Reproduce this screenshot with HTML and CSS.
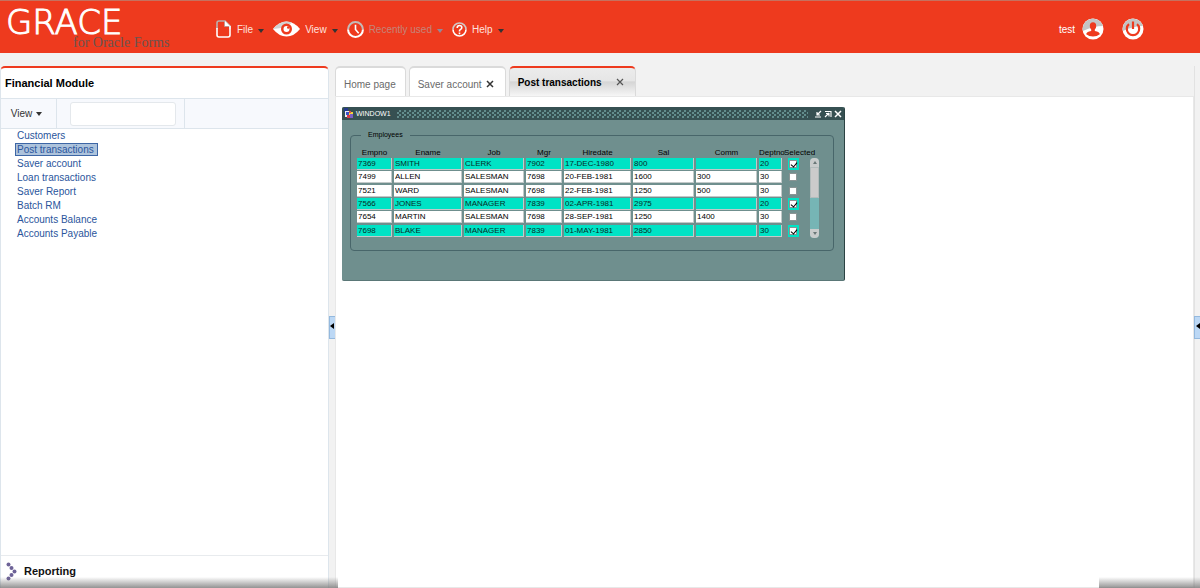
FILE: index.html
```
<!DOCTYPE html>
<html lang="en">
<head>
  <meta charset="UTF-8">
  <title>GRACE for Oracle Forms</title>
  <link rel="stylesheet" href="styles.css">
</head>
<body>
  <header class="topbar">
    <div class="logo">
      <span class="logo-name">GRACE</span>
      <span class="logo-sub">for Oracle Forms</span>
    </div>

    <nav class="menu">
      <button class="menu-item">
        <svg width="16" height="18" viewBox="0 0 16 18" fill="none" stroke-width="1.6">
          <path d="M1 9V3q0-2 2-2h6l5 5v3M9 1v5h5" stroke="#b9b0ae"/>
          <path d="M1 8v7q0 2 2 2h9q2 0 2-2V6" stroke="#fff"/>
          <path d="M9 1v5h5z" fill="#fff" stroke="none"/>
        </svg>
        File <span class="caret"></span>
      </button>
      <button class="menu-item">
        <svg width="27" height="16" viewBox="0 0 27 16">
          <path d="M0 8Q6 0.500 13.500 0.500T27 8Q21 15.500 13.500 15.500T0 8z" fill="#fff"/>
          <path d="M0 8Q6 0.500 13.500 0.500L19 1.500Q14 7 0 8z" fill="#d2d2d2"/>
          <circle cx="13.500" cy="8" r="5.500" fill="#ee3a1e"/>
          <circle cx="13.500" cy="8" r="3" fill="#fff"/>
          <circle cx="15.200" cy="6.500" r="1.200" fill="#ee3a1e"/>
        </svg>
        View <span class="caret"></span>
      </button>
      <button class="menu-item" disabled>
        <svg width="17" height="17" viewBox="0 0 16 16" fill="none" stroke-width="1.900">
          <path d="M1 8a7 7 0 0 1 14 0" stroke="#c3bab8"/>
          <path d="M15 8a7 7 0 0 1-14 0" stroke="#fff"/>
          <path d="M8 3.500V8l3 3.500" stroke="#fff" stroke-width="1.500"/>
        </svg>
        Recently used <span class="caret"></span>
      </button>
      <button class="menu-item">
        <svg width="15" height="15" viewBox="0 0 15 15" fill="none" stroke-width="1.600">
          <path d="M1 7.500a6.500 6.500 0 0 1 13 0" stroke="#d0c8c6"/>
          <path d="M14 7.500a6.500 6.500 0 0 1-13 0" stroke="#fff"/>
          <path d="M5.200 6q0-2.500 2.300-2.500t2.300 2q0 1.200-1.200 1.900T7.500 9v.5M7.500 10.600v1.600" stroke="#fff"/>
        </svg>
        Help <span class="caret"></span>
      </button>
    </nav>

    <div class="user">
      <span>test</span>
      <button class="round" aria-label="User profile">
        <svg width="22" height="22" viewBox="0 0 22 22">
          <circle cx="11" cy="11" r="10.500" fill="#fff"/>
          <path d="M.5 11a10.500 10.500 0 0 1 20.500-3Q12 8 .8 13z" fill="#c4c4c4"/>
          <path d="M11 4.300q3.200 0 3.200 3.600 0 2.300-1.400 3.600v1.400q5 .8 5 3.300-2.800 2.200-6.800 2.200t-6.800-2.200q0-2.500 5-3.300v-1.400q-1.400-1.300-1.400-3.600 0-3.600 3.200-3.600z" fill="#ee3a1e"/>
        </svg>
      </button>
      <button class="round" aria-label="Log out">
        <svg width="22" height="22" viewBox="0 0 22 22">
          <circle cx="11" cy="11" r="10.500" fill="#fff"/>
          <path d="M.5 11a10.500 10.500 0 0 1 20.500-3Q12 8 .8 13z" fill="#c4c4c4"/>
          <path d="M7 6.200a6.200 6.200 0 1 0 8 0M11 3.500v7.500" fill="none" stroke="#ee3a1e" stroke-width="2.200"/>
        </svg>
      </button>
    </div>
  </header>

  <div class="workspace">
    <aside class="sidebar">
      <h2 class="side-title">Financial Module</h2>
      <div class="toolbar">
        <button class="view-btn">View <span class="caret"></span></button>
        <div class="search"><input type="text" aria-label="Search modules"></div>
      </div>
      <ul class="links">
        <li><a href="#">Customers</a></li>
        <li><a href="#" class="selected">Post transactions</a></li>
        <li><a href="#">Saver account</a></li>
        <li><a href="#">Loan transactions</a></li>
        <li><a href="#">Saver Report</a></li>
        <li><a href="#">Batch RM</a></li>
        <li><a href="#">Accounts Balance</a></li>
        <li><a href="#">Accounts Payable</a></li>
      </ul>
      <button class="reporting">
        <svg width="11" height="19" viewBox="0 0 11 19" fill="#6d6297">
          <circle cx="2.500" cy="2.500" r="2"/>
          <circle cx="5.500" cy="6" r="2"/>
          <circle cx="8.500" cy="9.500" r="2"/>
          <circle cx="5.500" cy="13" r="2"/>
          <circle cx="2.500" cy="16.500" r="2"/>
        </svg>
        Reporting
      </button>
    </aside>

    <div class="splitter"><button class="handle" aria-label="Collapse left panel"></button></div>

    <main class="main">
      <div class="tabs">
        <button class="tab">Home page</button>
        <button class="tab closable">Saver account
          <svg width="8" height="8" viewBox="0 0 8 8" stroke="#333" stroke-width="1.500"><path d="M1 1l6 6M7 1l-6 6"/></svg>
        </button>
        <button class="tab closable active">Post transactions
          <svg width="8" height="8" viewBox="0 0 8 8" stroke="#555" stroke-width="1.200"><path d="M1 1l6 6M7 1l-6 6"/></svg>
        </button>
      </div>

      <div class="page">
        <section class="window">
          <div class="titlebar">
            <svg width="10" height="11" viewBox="0 0 10 11">
              <path d="M0 0h4v4H0z" fill="#253a8c"/>
              <path d="M1 3h6v6H1z" fill="#e8eef4"/>
              <path d="M2 4h3v3H2z" fill="#3a52c8"/>
              <path d="M5 4h4v4H5z" fill="#f2d43c"/>
              <path d="M3 7h3v3H3z" fill="#d93a4a"/>
              <path d="M6 6h3v4H6z" fill="#7a5fc0"/>
              <path d="M5 3h2v2H5z" fill="#e04a4a"/>
            </svg>
            <span>WINDOW1</span>
            <span class="grip"></span>
            <svg width="28" height="8" viewBox="0 0 28 8" fill="none" stroke="#fff">
              <path d="M1 7h6M7 1L3 5M3 2v3h3" stroke-width="1.200"/>
              <path d="M11 1.500h6V7M11 7l4-4M12 3.500h3v3" stroke-width="1.100"/>
              <path d="M21 1l6 6M27 1l-6 6" stroke-width="1.500"/>
            </svg>
          </div>

          <fieldset class="employees">
            <legend>Employees</legend>
            <div class="block">
              <table>
                <colgroup>
                  <col class="c-empno"><col class="c-ename"><col class="c-job"><col class="c-mgr">
                  <col class="c-hire"><col class="c-sal"><col class="c-comm"><col class="c-dept"><col class="c-sel">
                </colgroup>
                <thead>
                  <tr>
                    <th>Empno</th>
                    <th>Ename</th>
                    <th>Job</th>
                    <th>Mgr</th>
                    <th>Hiredate</th>
                    <th>Sal</th>
                    <th>Comm</th>
                    <th>Deptno</th>
                    <th>Selected</th>
                  </tr>
                </thead>
                <tbody id="rows"></tbody>
              </table>
              <div class="scroll">
                <span class="arrow up"></span>
                <span class="thumb"></span>
                <span class="arrow down"></span>
              </div>
            </div>
          </fieldset>
        </section>
      </div>
    </main>

    <div class="splitter right"><button class="handle" aria-label="Expand right panel"></button></div>
  </div>

  <div class="shade shade-left"></div>
  <div class="shade shade-right"></div>

  <script>
    const columns = ['Empno', 'Ename', 'Job', 'Mgr', 'Hiredate', 'Sal', 'Comm', 'Deptno'];
    const employees = [
      ['7369', 'SMITH', 'CLERK', '7902', '17-DEC-1980', '800', '', '20', true],
      ['7499', 'ALLEN', 'SALESMAN', '7698', '20-FEB-1981', '1600', '300', '30', false],
      ['7521', 'WARD', 'SALESMAN', '7698', '22-FEB-1981', '1250', '500', '30', false],
      ['7566', 'JONES', 'MANAGER', '7839', '02-APR-1981', '2975', '', '20', true],
      ['7654', 'MARTIN', 'SALESMAN', '7698', '28-SEP-1981', '1250', '1400', '30', false],
      ['7698', 'BLAKE', 'MANAGER', '7839', '01-MAY-1981', '2850', '', '30', true]
    ];

    document.getElementById('rows').innerHTML = employees.map(emp => {
      const checked = emp[8];
      const cells = columns.map((name, i) =>
        `<td><input type="text" aria-label="${name}" value="${emp[i]}"></td>`).join('');
      return `<tr class="${checked ? 'picked' : ''}">${cells}
        <td class="sel"><label><input type="checkbox" aria-label="Selected" ${checked ? 'checked' : ''}></label></td></tr>`;
    }).join('');
  </script>
</body>
</html>
```
FILE: styles.css
```
* { box-sizing: border-box; }
body {
  margin: 0;
  height: 100vh;
  display: flex;
  flex-direction: column;
  overflow: hidden;
  background: #f2f2f2;
  font-family: "Liberation Sans", Arial, sans-serif;
  font-size: 10px;
}
button { font: inherit; border: 0; padding: 0; background: none; color: inherit; }
svg { flex: none; display: block; }

.caret {
  border: 3px solid transparent;
  border-top: 4px solid #333;
  border-bottom: 0;
}

/* top bar */
.topbar {
  display: flex;
  align-items: center;
  height: 53px;
  padding: 4px 56px 0 6px;
  background: #ee3a1e;
  border-top: 1px solid #c5715f;
  color: #fff;
}
.logo { width: 210px; display: flex; flex-direction: column; }
.logo-name { font: 200 34px/28px "DejaVu Sans", sans-serif; -webkit-text-stroke: 1px #fff; }
.logo-sub { font: 14px/14px "Liberation Serif", serif; color: #6b5450; padding-left: 67px; }
.menu { display: flex; gap: 9px; flex: 1; }
.menu-item { display: flex; align-items: center; gap: 5px; height: 20px; color: #ffe3de; }
.menu-item .caret { margin-top: 4px; }
.menu-item:disabled { color: #c4847a; }
.menu-item:disabled .caret { border-top-color: #93899a; }
.user { display: flex; align-items: center; }
.round { margin-left: 7px; }
.round + .round { margin-left: 18px; }

/* workspace */
.workspace { flex: 1; display: flex; min-height: 0; padding-top: 13px; }
.sidebar {
  width: 329px;
  display: flex;
  flex-direction: column;
  background: #fff;
  border: 1px solid #dde5ec;
  border-top: 2px solid #ee3a1e;
  border-bottom: 0;
  border-radius: 5px 5px 0 0;
}
.side-title { margin: 0; padding: 0 4px; font-size: 11px; line-height: 30px; }
.toolbar {
  display: flex;
  height: 31px;
  background: #f7f9fd;
  border: solid #dde5ec;
  border-width: 1px 0;
}
.view-btn {
  display: flex;
  align-items: center;
  justify-content: center;
  gap: 4px;
  width: 56px;
  padding-right: 4px;
  border-right: 1px solid #dde5ec;
  color: #333;
}
.search { display: flex; align-items: center; padding: 0 8px 0 13px; border-right: 1px solid #dde5ec; }
.search input {
  width: 106px;
  height: 24px;
  border: 1px solid #e4e8ec;
  border-radius: 3px;
  background: #fff;
}
.links { flex: 1; list-style: none; margin: 0; padding: 0 14px; }
.links li { display: flex; height: 14px; }
.links a {
  padding: 0 1px;
  border: 1px solid transparent;
  line-height: 11px;
  height: 13px;
  color: #2a559c;
  text-decoration: none;
}
.links a.selected { background: #adc3dc; border-color: #3d66a5; padding-right: 3px; }
.reporting {
  display: flex;
  align-items: center;
  gap: 7px;
  height: 33px;
  padding: 0 5px 2px;
  border-top: 1px solid #e8ebee;
  font-size: 11px;
  font-weight: bold;
  color: #111;
}

.splitter { width: 6px; display: flex; align-items: center; justify-content: center; }
.splitter.right { border-left: 1px solid #e2e2e2; }
.handle {
  flex: none;
  display: flex;
  align-items: center;
  justify-content: center;
  width: 7px;
  height: 23px;
  background: #bcd8f5;
  border: 1px solid #94b9de;
}
.handle::before {
  content: "";
  margin-bottom: 3px;
  border: 3px solid transparent;
  border-right: 4px solid #000;
  border-left: 0;
}

/* tabs and page */
.main { flex: 1; min-width: 0; display: flex; flex-direction: column; }
.tabs { display: flex; gap: 3px; height: 30px; }
.tab {
  display: flex;
  align-items: center;
  gap: 4px;
  padding: 4px 9px 0 8px;
  background: #fff;
  border: 1px solid #dadada;
  border-top-width: 2px;
  border-bottom: 0;
  border-radius: 5px 5px 0 0;
  color: #6a6a6a;
}
.closable { padding-right: 11px; }
.tab.active {
  gap: 14px;
  padding-top: 0;
  background: linear-gradient(#ececec 0%, #e6e6e6 45%, #d5d5d5 50%, #f6f6f6 100%);
  border-top-color: #ee3a1e;
  color: #000;
  font-weight: bold;
}
.page { flex: 1; background: #fff; border: 1px solid #e8e8e8; padding: 10px 6px; }

/* forms window */
.window {
  width: 503px;
  height: 174px;
  background: #6f8f8e;
  border-right: 1px solid #2b4343;
  border-bottom: 1px solid #5a7777;
  border-radius: 2px;
  font-size: 8px;
}
.titlebar {
  display: flex;
  align-items: center;
  gap: 2px;
  height: 13px;
  padding: 0 2px;
  background: #365052;
  border-radius: 2px 2px 0 0;
  color: #fff;
  font-size: 7px;
}
.grip {
  flex: 1;
  height: 8px;
  margin: 0 4px;
  background-image:
    radial-gradient(circle at 1px 3px, #628c8c 1px, transparent 1px),
    radial-gradient(circle at 3px 1px, #628c8c 1px, transparent 1px);
  background-size: 5px 4px;
}
.employees {
  margin: 10px 10px 0 8px;
  padding: 8px 6px 12px;
  min-width: 0;
  border: 1px solid #48666a;
  border-radius: 4px;
}
.employees legend { margin-left: 4px; padding: 0 7px; font-size: 7px; line-height: 10px; }
.block { display: flex; align-items: flex-end; gap: 8px; }
table { table-layout: fixed; width: 445px; height: 90px; border-collapse: collapse; }
th { height: 10px; padding: 0 2px 0 0; font-weight: normal; line-height: 10px; white-space: nowrap; }
th:nth-child(n+8) { padding: 0; }
td { padding: 0 2px 1px 0; }
.c-empno { width: 37px; }
.c-ename { width: 70px; }
.c-job { width: 62px; }
.c-mgr { width: 38px; }
.c-hire { width: 69px; }
.c-sal { width: 63px; }
.c-comm { width: 63px; }
.c-dept { width: 25px; }
.c-sel { width: 18px; }
td input[type="text"] {
  display: block;
  width: 100%;
  height: 12px;
  padding: 0 1px;
  border: 0;
  border-right: 1px solid #c3c9c9;
  border-bottom: 1px solid #c3c9c9;
  background: #fff;
  font: inherit;
  color: #000;
}
.picked input[type="text"] { background: #00e3c5; color: #062c28; }
.sel { padding-left: 4px; }
.sel label { display: flex; align-items: center; width: 11px; height: 12px; }
.picked .sel label { background: #00e3c5; }
.sel input {
  appearance: none;
  display: flex;
  margin: 0 0 0 1px;
  width: 8px;
  height: 8px;
  background: #fff;
  border: 1px solid #8a9494;
}
.sel input:checked::before {
  content: "";
  width: 3px;
  height: 5px;
  margin-left: 2px;
  border: solid #000;
  border-width: 0 1px 1px 0;
  transform: rotate(40deg);
}
.scroll {
  display: flex;
  flex-direction: column;
  width: 9px;
  height: 80px;
  background: #76b5b5;
  border-radius: 4px;
}
.arrow {
  display: flex;
  align-items: center;
  justify-content: center;
  height: 9px;
  background: #c9cccc;
}
.arrow::before { content: ""; border: 2px solid transparent; }
.up { border-radius: 4px 4px 0 0; }
.up::before { border-bottom: 3px solid #6a7777; border-top: 0; }
.down { border-radius: 0 0 4px 4px; margin-top: auto; }
.down::before { border-top: 3px solid #6a7777; border-bottom: 0; }
.thumb { height: 31px; background: #cbcbcb; border: 1px solid #b3bcbc; }

/* shadow along the bottom edge, left and right of the page */
.shade {
  position: absolute;
  bottom: 0;
  height: 11px;
  background: linear-gradient(rgba(120, 120, 120, 0), rgba(120, 120, 120, 0.8));
  pointer-events: none;
}
.shade-left { left: 0; width: 338px; }
.shade-right { right: 0; width: 101px; }
```
